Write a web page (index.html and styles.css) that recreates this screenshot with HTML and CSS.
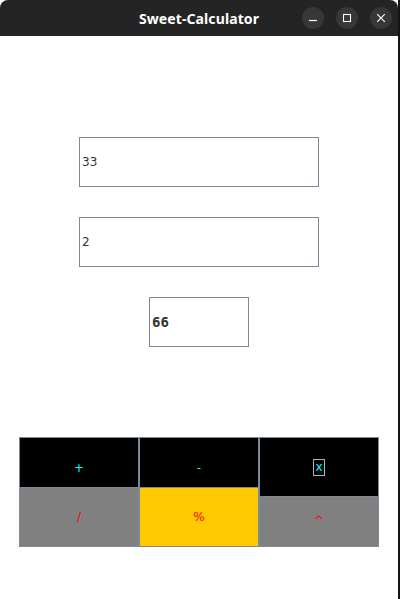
FILE: index.html
```html
<!DOCTYPE html>
<html>
<head>
<meta charset="utf-8">
<link rel="stylesheet" href="styles.css">
</head>
<body>
<div class="window">
  <div class="titlebar">
    <div class="title">Sweet-Calculator</div>
    <div class="controls">
      <span class="ctl">
        <svg width="10" height="10" viewBox="0 0 10 10"><path d="M1 7.5h8" stroke="#fff" stroke-width="1.2"/></svg>
      </span>
      <span class="ctl">
        <svg width="10" height="10" viewBox="0 0 10 10"><rect x="1.5" y="1.5" width="7" height="7" fill="none" stroke="#fff" stroke-width="1.1"/></svg>
      </span>
      <span class="ctl">
        <svg width="10" height="10" viewBox="0 0 10 10"><path d="M1.2 1.2l7.6 7.6M8.8 1.2l-7.6 7.6" stroke="#fff" stroke-width="1.2"/></svg>
      </span>
    </div>
  </div>
  <div class="content">
    <input class="field wide" type="text" value="33">
    <input class="field wide" type="text" value="2">
    <input class="field result" type="text" value="66">
    <div class="pad">
      <div class="col">
        <div class="key dark tall-label"><span class="cyan">+</span></div>
        <div class="key grey big"><span class="red">/</span></div>
      </div>
      <div class="col">
        <div class="key dark tall-label"><span class="cyan">-</span></div>
        <div class="key yellow big"><span class="red">%</span></div>
      </div>
      <div class="col">
        <div class="key dark big"><span class="cyan focus">x</span></div>
        <div class="key grey small"><span class="red">^</span></div>
      </div>
    </div>
  </div>
</div>
</body>
</html>
```

FILE: styles.css
```css
html, body {
  margin: 0;
  padding: 0;
  background: #ffffff;
}

.window {
  width: 398px;
  height: 599px;
  border-right: 2px solid #141414;
  background: #ffffff;
  display: flex;
  flex-direction: column;
}

.titlebar {
  height: 36px;
  background: #242424;
  border-radius: 8px 8px 0 0;
  position: relative;
  display: flex;
  align-items: center;
  justify-content: center;
}

.title {
  color: #ffffff;
  font-family: "Noto Sans", "DejaVu Sans", sans-serif;
  font-weight: bold;
  font-size: 14px;
  letter-spacing: 0.1px;
}

.controls {
  position: absolute;
  right: 6px;
  top: 7px;
  display: flex;
  gap: 12px;
}

.ctl {
  width: 22px;
  height: 22px;
  border-radius: 50%;
  background: #373737;
  display: flex;
  align-items: center;
  justify-content: center;
}

.content {
  display: flex;
  flex-direction: column;
  align-items: center;
  padding-top: 101px;
}

.field {
  box-sizing: border-box;
  height: 50px;
  border: 1px solid #7a8a99;
  border-radius: 0;
  padding: 0 2px;
  margin: 0 0 30px 0;
  outline: none;
  background: #ffffff;
  color: #333333;
  font-family: "DejaVu Sans", sans-serif;
  font-size: 12px;
}

.wide {
  width: 240px;
}

.result {
  width: 100px;
  font-family: "DejaVu Sans Mono", monospace;
  font-weight: bold;
  font-size: 14px;
  margin-bottom: 90px;
}

.pad {
  width: 360px;
  height: 110px;
  box-sizing: border-box;
  border: 1px solid #7a8a99;
  background: #7a8a99;
  display: grid;
  grid-template-columns: 1fr 1fr 1fr;
  column-gap: 2px;
}

.col {
  display: flex;
  flex-direction: column;
  gap: 1px;
}

.key {
  box-sizing: border-box;
  display: flex;
  align-items: center;
  justify-content: center;
  font-family: "DejaVu Sans", sans-serif;
  font-size: 12px;
}

.tall-label {
  height: 49px;
  padding-top: 10px;
}

.big {
  height: 58px;
}

.small {
  height: 49px;
  padding-bottom: 2px;
}

.dark { background: #000000; }
.grey { background: #808080; }
.yellow { background: #ffc800; }

.cyan { color: #00ffff; }
.red { color: #ff0000; }

.focus {
  border: 1px solid #a3b8cc;
  padding: 0 1px;
  line-height: 15px;
}
```
